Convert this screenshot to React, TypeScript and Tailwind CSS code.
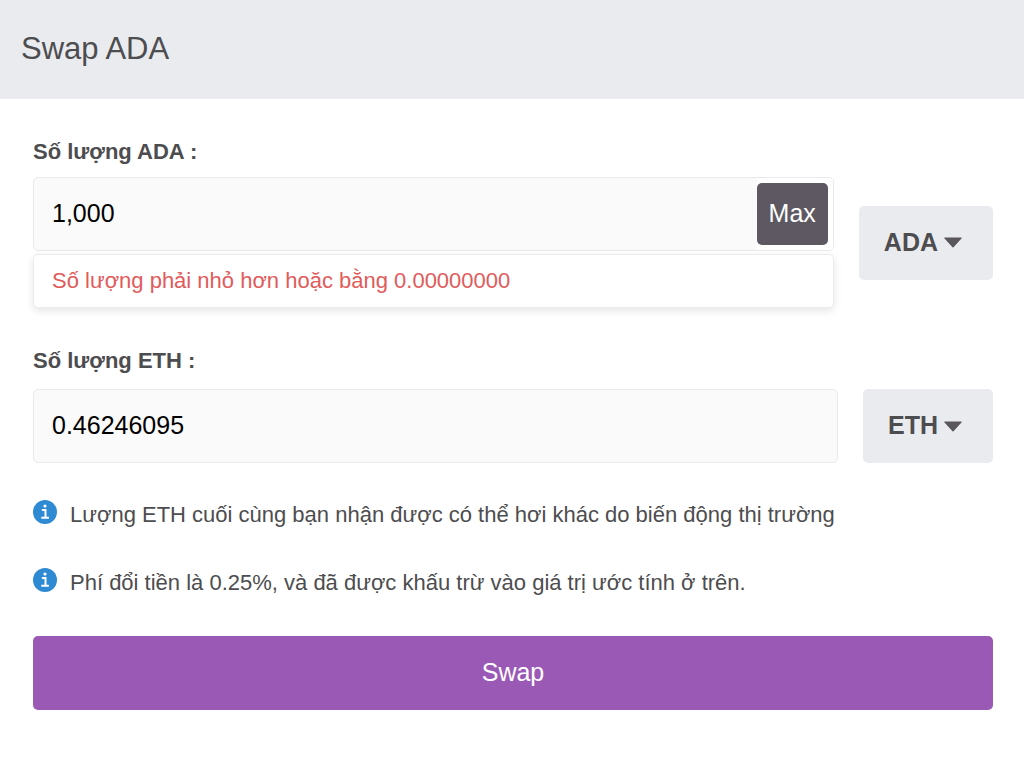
import React, { useState } from 'react';
import type { ReactNode } from 'react';

interface AmountFieldProps {
  id: string;
  value: string;
  onChange: (value: string) => void;
  error?: string;
  onMax?: () => void;
}

const NOTES = [
  'Lượng ETH cuối cùng bạn nhận được có thể hơi khác do biến động thị trường',
  'Phí đổi tiền là 0.25%, và đã được khấu trừ vào giá trị ước tính ở trên.',
];

function InfoIcon() {
  return (
    <svg viewBox="0 0 24 24" className="h-6 w-6 shrink-0" aria-hidden="true">
      <circle cx="12" cy="12" r="12" fill="#2f8ad4" />
      <circle cx="12" cy="6" r="1.600" fill="#fff" />
      <path d="M8.900 10h3.600v7.500M8.300 17.700h7.600" fill="none" stroke="#fff" strokeWidth="2" />
    </svg>
  );
}

function Note({ children }: { children: ReactNode }) {
  return (
    <p className="flex items-start gap-[13px]">
      <InfoIcon />
      <span className="text-[22px] leading-[30px]">{children}</span>
    </p>
  );
}

function CoinButton({ coin }: { coin: string }) {
  return (
    <button
      type="button"
      className="flex h-[74px] shrink-0 items-center gap-1.5 rounded-[5px] bg-[#e9ebef] pr-[31px] pl-[25px] text-[25px] font-bold"
    >
      {coin}
      <svg viewBox="0 0 18 11" className="h-[11px] w-[18px]" aria-hidden="true">
        <path d="M.8.500h16.400q.900.200.300 1L9.500 10.300q-.500.500-1 0L.5 1.500Q-.100.700.8.500z" fill="#5a575c" />
      </svg>
    </button>
  );
}

function AmountField({ id, value, onChange, error, onMax }: AmountFieldProps) {
  return (
    <div className="min-w-0 flex-1">
      <div className="relative">
        <input
          id={id}
          value={value}
          onChange={(e) => onChange(e.target.value)}
          className="block h-[74px] w-full rounded-[5px] border border-[#e9e9eb] bg-[#fafafa] px-[18px] pb-0.5 text-[25px] text-black outline-none"
        />
        {onMax && (
          <div className="absolute inset-y-px right-px flex rounded-r-[4px] bg-white py-[5px] pr-[5px]">
            <button
              type="button"
              onClick={onMax}
              className="rounded-[5px] bg-[#5d5861] px-3 text-[25px] text-white"
            >
              Max
            </button>
          </div>
        )}
      </div>
      {error && (
        <p className="mt-[3px] rounded-[5px] border border-[#ececee] bg-white px-[18px] py-3 text-[22px] leading-7 text-[#e15b5b] shadow-[0_3px_8px_rgba(0,0,0,0.1)]">
          {error}
        </p>
      )}
    </div>
  );
}

export default function App() {
  const [from, setFrom] = useState('1,000');
  const [to, setTo] = useState('0.46246095');

  return (
    <main className="min-h-screen bg-white font-['Liberation_Sans',Arial,sans-serif] text-[#4d4d4f]">
      <header className="bg-[#e9ebef] px-[21px] pt-[29px] pb-[30px]">
        <h1 className="text-[31px] leading-10">Swap ADA</h1>
      </header>

      <form className="pt-[37px] pr-[31px] pb-12 pl-[33px]" onSubmit={(e) => e.preventDefault()}>
        <label htmlFor="from" className="block text-[22px] leading-8 font-bold">
          Số lượng ADA :
        </label>
        <div className="mt-[9px] flex items-center gap-[25px]">
          <AmountField
            id="from"
            value={from}
            onChange={setFrom}
            error="Số lượng phải nhỏ hơn hoặc bằng 0.00000000"
            onMax={() => setFrom('0')}
          />
          <CoinButton coin="ADA" />
        </div>

        <label htmlFor="to" className="mt-[37px] block text-[22px] leading-8 font-bold">
          Số lượng ETH :
        </label>
        <div className="mt-3 flex items-center gap-[25px]">
          <AmountField id="to" value={to} onChange={setTo} />
          <CoinButton coin="ETH" />
        </div>

        <div className="mt-[37px] space-y-[38px]">
          {NOTES.map((note) => (
            <Note key={note}>{note}</Note>
          ))}
        </div>

        <button
          type="submit"
          className="mt-[38px] h-[74px] w-full rounded-[5px] bg-[#9b59b6] text-[25px] text-white"
        >
          Swap
        </button>
      </form>
    </main>
  );
}
